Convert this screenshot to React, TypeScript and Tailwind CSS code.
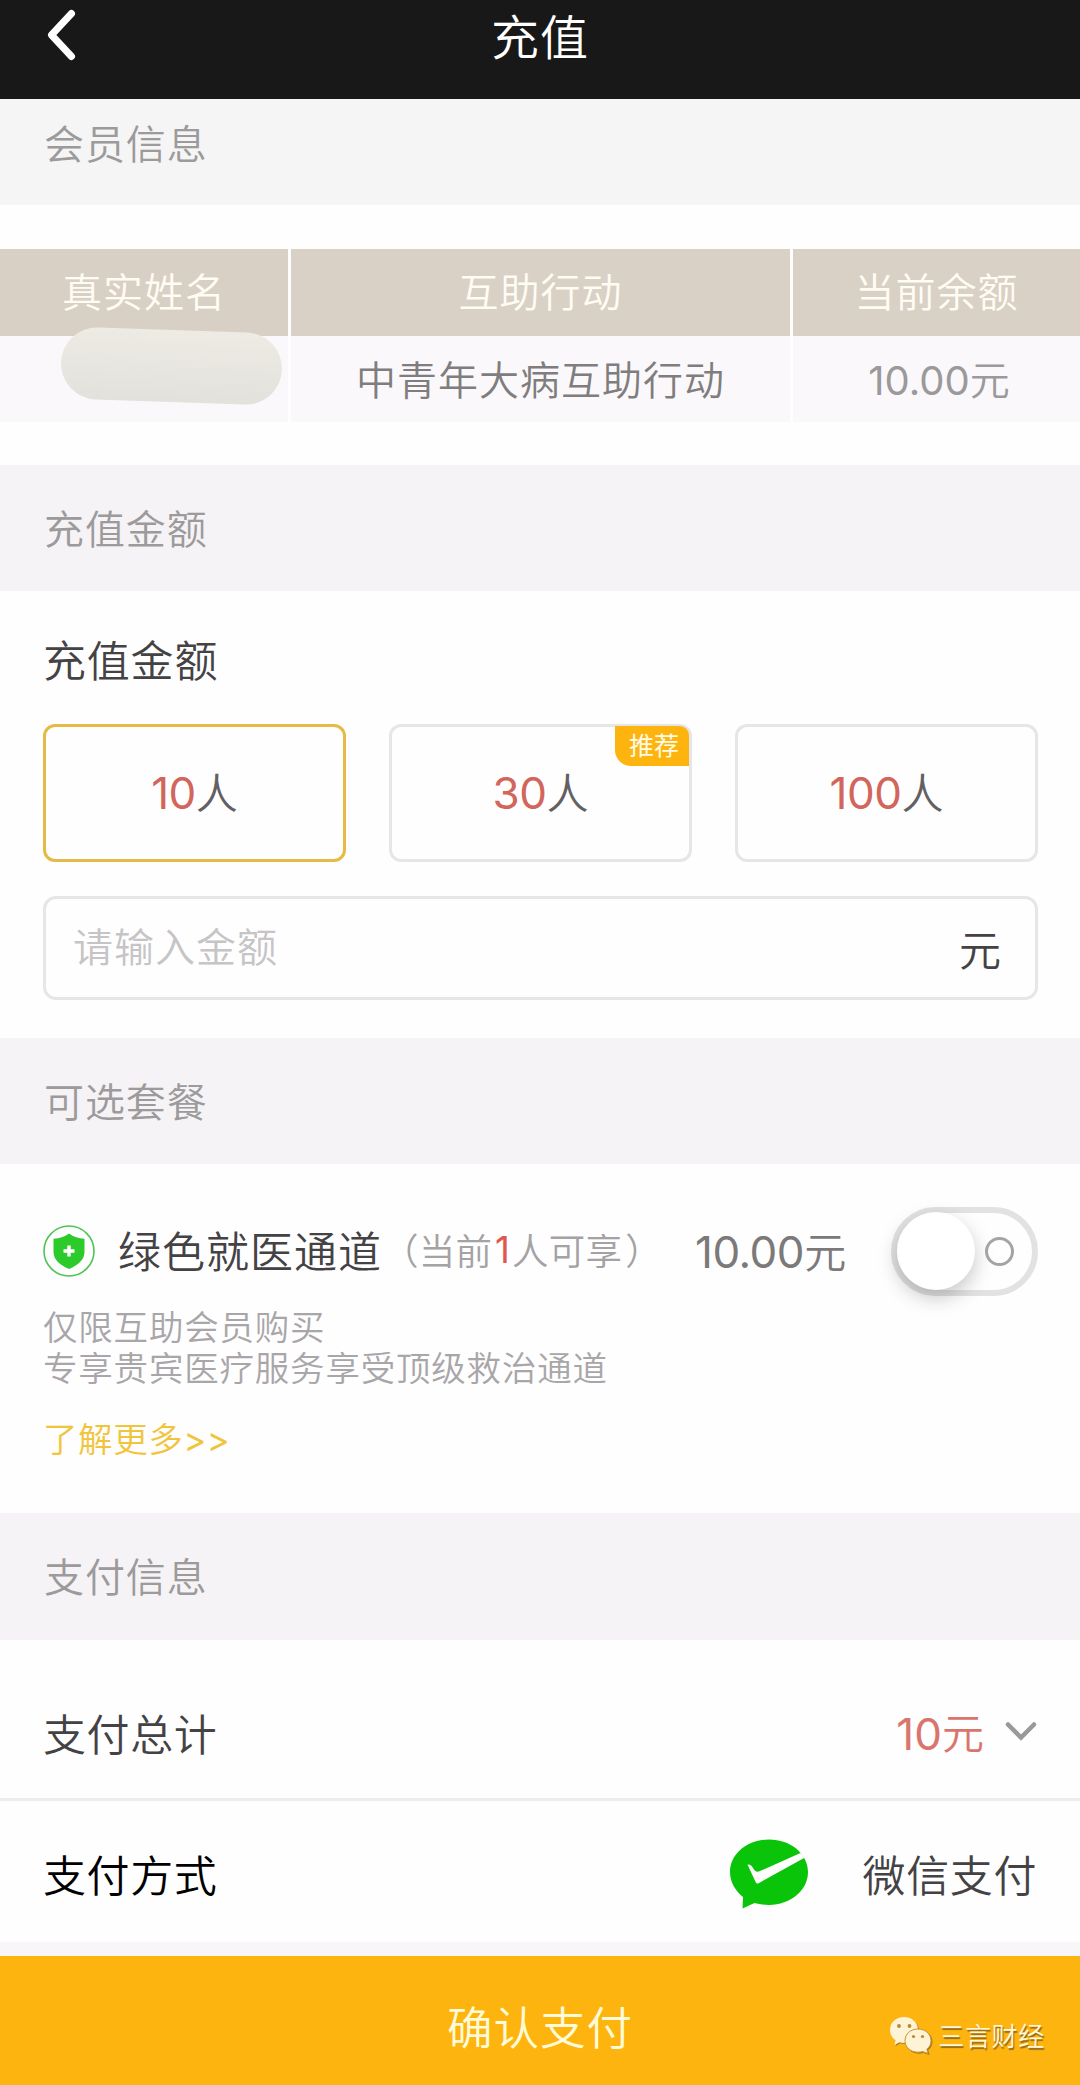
import type { ReactNode } from "react"
import { useState } from "react"
import { clsx } from "clsx"

const amounts = [
    { count: 10, recommended: false },
    { count: 30, recommended: true },
    { count: 100, recommended: false },
]

function Num({ children, className }: { children: ReactNode; className?: string }) {
    return (
        <span className={clsx("font-['Inter','Noto_Sans_CJK_SC',sans-serif] font-normal", className)}>{children}</span>
    )
}

function SectionTitle({ children, className }: { children: ReactNode; className: string }) {
    return (
        <h2 className={clsx("flex items-center pl-[44px] text-[40px] leading-none tracking-[0.9px] text-[#9c9a9b]", className)}>
            {children}
        </h2>
    )
}

function ShieldIcon() {
    return (
        <svg className="h-[52px] w-[52px] shrink-0" viewBox="0 0 52 52" fill="none">
            <circle cx="26" cy="26" r="25" stroke="#4cc552" strokeWidth="1.6" />
            <path d="M26 8.500c4.500 3.600 9.500 5 15.500 5.200V27c0 8-6.500 13-15.500 17-9-4-15.500-9-15.500-17V13.700c6-.2 11-1.600 15.500-5.200z" fill="#2ccb2b" />
            <path d="M26 20.500v11M20.500 26h11" stroke="#fff" strokeWidth="3.4" />
        </svg>
    )
}

function WechatPayIcon() {
    return (
        <svg className="mt-px mr-px h-[70px] w-[80px]" viewBox="0 0 80 70">
            <path d="M40 .5C18 .5 1 15 1 33c0 10 5 18.500 13 25l-.5 11.500L25.500 64c4.500 1.300 9.500 1.900 14.500 1.900 21.500 0 39-14.500 39-32.900S61.500.5 40 .5z" fill="#0ac40a" />
            <path d="M18.500 25.500c2.500-.5 4 .8 5.500 3.500 1.600 3 3.600 4.300 6.500 3.300L71.500 14l4.500 4.500L30 44c-1.600 1-2.800.6-3.500-1.200z" fill="#fff" />
        </svg>
    )
}

function WechatIcon() {
    return (
        <svg className="h-[38px] w-[44px] drop-shadow-[1px_1px_0_#a87c20]" viewBox="0 0 44 38">
            <path d="M15 1C7 1 1 6.500 1 14c0 4.500 2.200 8 5.500 10.500L5.500 29l5-2.700c1.500.4 3 .6 4.500.6 8 0 14-5.500 14-13S23 1 15 1z" fill="#fff3d6" />
            <circle cx="10" cy="10" r="1.9" fill="#b78a2e" />
            <circle cx="20.5" cy="10" r="1.9" fill="#b78a2e" />
            <path d="M29 13c-7.500 0-13 5-13 11.700S21.500 36.200 29 36.200c1.700 0 3.200-.2 4.600-.7l5.400 2-1.200-4.300c2.700-2 4.200-5 4.200-8.500C42 18 36.500 13 29 13z" fill="#fff3d6" stroke="#c9932a" strokeWidth="1" />
            <circle cx="24.5" cy="20.5" r="1.6" fill="#b78a2e" />
            <circle cx="33.5" cy="20.5" r="1.6" fill="#b78a2e" />
        </svg>
    )
}

function Toggle({ on, onChange }: { on: boolean; onChange: () => void }) {
    return (
        <button
            onClick={onChange}
            role="switch"
            aria-checked={on}
            className={clsx(
                "flex h-[89px] w-[147px] items-center justify-between rounded-full border-[6px] border-[#e3e1e3] pr-[18px]",
                on && "flex-row-reverse",
            )}
        >
            <span className="h-[78px] w-[78px] rounded-full bg-white shadow-[0_8px_20px_rgba(0,0,0,0.22)]" />
            <span className="h-[29px] w-[29px] rounded-full border-[3px] border-[#a5a3a4]" />
        </button>
    )
}

export default function App() {
    const [selected, setSelected] = useState(10)
    const [on, setOn] = useState(false)

    return (
        <div className="flex h-[2085px] w-[1080px] flex-col overflow-hidden bg-[#fefefe] font-['Noto_Sans_CJK_SC',sans-serif] font-[350] leading-none text-[#444244]">
            <header className="grid h-[99px] shrink-0 grid-cols-3 items-start bg-[#181818] pt-[7px] text-white">
                <svg className="ml-[43px] mt-px h-[54px] w-[36px]" viewBox="0 0 36 54" fill="none">
                    <path d="M28.500 5.500 8.500 27l20 21.500" stroke="#fff" strokeWidth="7" strokeLinecap="round" strokeLinejoin="round" />
                </svg>
                <h1 className="text-center text-[48px] leading-[54px] tracking-[1px]">充值</h1>
            </header>

            <SectionTitle className="h-[106px] bg-[#f5f5f5] pb-[21px]">会员信息</SectionTitle>

            <div className="mt-[44px] grid grid-cols-[288px_499px_287px] gap-x-[3px] text-center text-[40px] tracking-[1px]">
                <div className="h-[87px] bg-[#d9d0c5] leading-[83px] text-[#fffcf3]">真实姓名</div>
                <div className="h-[87px] bg-[#d9d1c5] leading-[83px] text-[#fffcf3]">互助行动</div>
                <div className="h-[87px] bg-[#d9d0c6] leading-[83px] text-[#fffcf3]">当前余额</div>
                <div className="relative h-[86px] bg-[#faf8fa]">
                    <div className="absolute -top-[6px] left-[61px] h-[72px] w-[221px] rotate-[2deg] rounded-[36px] bg-linear-to-b from-[#edebe3] to-[#e2e1dc]" />
                </div>
                <div className="h-[86px] bg-[#faf8fa] leading-[84px] text-[#7f7d7e]">中青年大病互助行动</div>
                <div className="h-[86px] bg-[#faf8fa] pl-[5px] leading-[84px] tracking-normal text-[#9b999a]">
                    <Num>10.00</Num>元
                </div>
            </div>

            <SectionTitle className="mt-[43px] h-[126px] bg-[#f5f3f5] pb-[3px]">充值金额</SectionTitle>

            <section className="pr-[42px] pl-[43px]">
                <h3 className="pt-[46px] text-[43px] leading-[42px] tracking-[0.8px]">充值金额</h3>
                <div className="mt-[45px] grid grid-cols-3 gap-x-[43px]">
                    {amounts.map(({ count, recommended }) => (
                        <button
                            key={count}
                            onClick={() => setSelected(count)}
                            className={clsx(
                                "relative flex h-[138px] items-center justify-center rounded-[12px] border-[3px] text-[42px] leading-none",
                                selected === count ? "border-[#e6bb45]" : "border-[#e8e5e8]",
                            )}
                        >
                            <Num className="text-[44px] tracking-[-0.5px] text-[#d2655c]">{count}</Num>
                            <span className="pb-[5px] text-[#626062]">人</span>
                            {recommended && (
                                <span className="absolute -top-px right-0 flex h-[40px] w-[74px] items-center justify-center rounded-tr-[9px] rounded-bl-[16px] bg-[#feb40f] pb-[3px] pl-[4px] text-[25px] font-normal text-[#fffbe6]">
                                    推荐
                                </span>
                            )}
                        </button>
                    ))}
                </div>
                <div className="mt-[34px] flex h-[104px] items-center justify-between rounded-[13px] border-[3px] border-[#e8e5e8] pr-[34px] pl-[27px]">
                    <span className="pb-[6px] text-[40px] tracking-[1px] text-[#c6c4c6]">请输入金额</span>
                    <span className="pb-[1px] text-[42px]">元</span>
                </div>
            </section>

            <SectionTitle className="mt-[38px] h-[126px] bg-[#f5f3f5] pb-[3px]">可选套餐</SectionTitle>

            <section className="h-[349px] pr-[42px] pl-[43px]">
                <div className="flex h-[174px] items-center">
                    <ShieldIcon />
                    <span className="ml-[23px] pb-[4px] text-[43px] tracking-[1px]">绿色就医通道</span>
                    <span className="flex w-[284px] pb-[2px] text-[36.5px] tracking-[0.2px] text-[#a4a2a4]">
                        （当前<Num className="w-[20px] pl-[3px] text-[#e0574c]">1</Num>人可享
                        <span className="pl-[3px]">）</span>
                    </span>
                    <span className="ml-[29px] flex items-center text-[42px] text-[#7b797a]">
                        <Num className="pt-[2px] text-[44px] tracking-[-0.5px]">10.00</Num>
                        <span className="pb-[3px]">元</span>
                    </span>
                    <div className="ml-auto">
                        <Toggle on={on} onChange={() => setOn(!on)} />
                    </div>
                </div>
                <p className="-mt-[33px] text-[34.5px] leading-[40.5px] tracking-[0.8px] text-[#a9a6a9]">
                    仅限互助会员购买
                    <br />
                    专享贵宾医疗服务享受顶级救治通道
                </p>
                <a className="mt-[33px] block text-[34.5px] leading-[36px] tracking-[0.6px] text-[#f0c53c]">
                    了解更多<Num>&gt;&gt;</Num>
                </a>
            </section>

            <SectionTitle className="h-[127px] bg-[#f5f3f5] pb-[3px]">支付信息</SectionTitle>

            <div className="flex h-[161px] items-center justify-between border-b-[3px] border-[#ededee] pr-[42px] pl-[43px] pt-[27px]">
                <span className="pb-[1px] text-[43px] tracking-[0.6px]">支付总计</span>
                <div className="flex items-center">
                    <span className="flex items-center text-[42px] text-[#d9756c]">
                        <Num className="pt-[2px] text-[44px]">10</Num>
                        <span className="pb-[3px]">元</span>
                    </span>
                    <svg className="ml-[20px] h-[24px] w-[34px]" viewBox="0 0 34 24" fill="none">
                        <path d="m4 3.500 13 13 13-13" stroke="#9a999a" strokeWidth="4.5" strokeLinecap="round" />
                    </svg>
                </div>
            </div>

            <div className="flex h-[141px] items-center justify-between px-[43px] pt-[4px]">
                <span className="pb-[1px] text-[43px] tracking-[0.6px] text-black">支付方式</span>
                <div className="flex items-center gap-[53px]">
                    <WechatPayIcon />
                    <span className="pb-[1px] text-[43px] tracking-[0.6px]">微信支付</span>
                </div>
            </div>

            <div className="h-[14px] shrink-0 bg-[#f8f6f8]" />
            <button className="relative h-[129px] shrink-0 bg-[#feb40f] pt-[10px] text-[45.5px] leading-none tracking-[1px] text-[#fffbd8]">
                确认支付
                <span className="absolute right-[35px] bottom-[31px] flex items-center gap-[5px] text-[26px] tracking-[0.7px] text-[#fff6dc] [text-shadow:1px_2px_1px_#8f6a1a]">
                    <WechatIcon />
                    <span>三言财经</span>
                </span>
            </button>
        </div>
    )
}
